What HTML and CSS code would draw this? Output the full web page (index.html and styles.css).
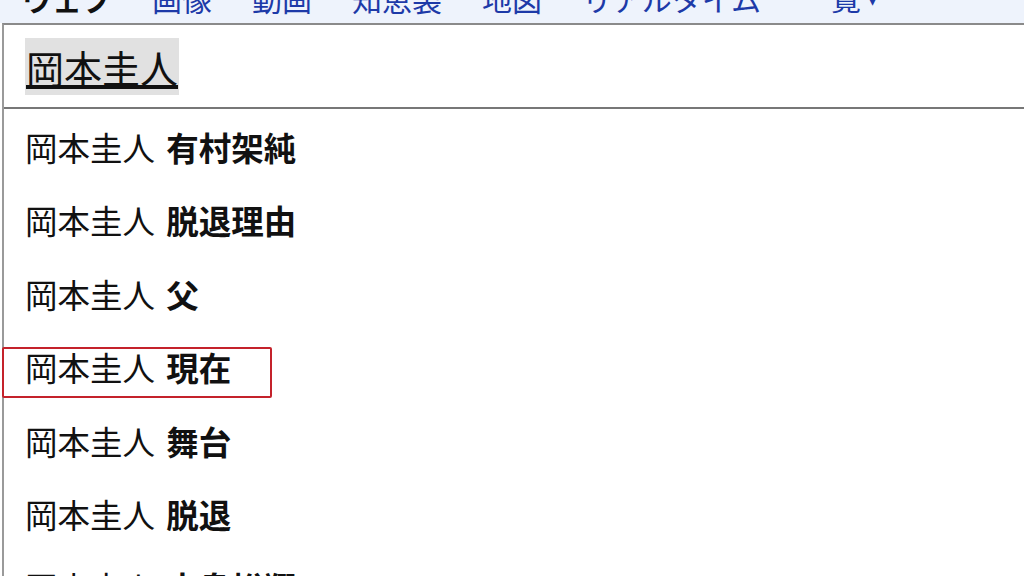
FILE: index.html
```html
<!DOCTYPE html>
<html lang="ja">
<head>
    <meta charset="UTF-8">
    <meta name="viewport" content="width=device-width, initial-scale=1.0">
    <title>検索候補</title>
    <link rel="stylesheet" href="styles.css">
</head>
<body>
    <div class="tabs">
        <span class="tab current">ウェブ</span>
        <span class="tab">画像</span>
        <span class="tab">動画</span>
        <span class="tab">知恵袋</span>
        <span class="tab">地図</span>
        <span class="tab">リアルタイム</span>
        <span class="tab">一覧 <small>▾</small></span>
    </div>
    <div class="search">
        <div class="query">
            <span class="typed">岡本圭人</span>
        </div>
        <ul class="suggest">
            <li>岡本圭人 <b>有村架純</b></li>
            <li>岡本圭人 <b>脱退理由</b></li>
            <li>岡本圭人 <b>父</b></li>
            <li class="marked">岡本圭人 <b>現在</b><span class="mark"></span></li>
            <li>岡本圭人 <b>舞台</b></li>
            <li>岡本圭人 <b>脱退</b></li>
            <li>岡本圭人 <b>中島裕翔</b></li>
        </ul>
    </div>
</body>
</html>
```

FILE: styles.css
```css
html, body { margin: 0; height: 100%; overflow: hidden; }
body {
    font-family: "Noto Sans CJK JP", "Noto Sans", sans-serif;
    background: #fff;
    color: #111;
}

/* barra de pestañas, cortada arriba */
.tabs {
    height: 23px;
    background: #eef3fc;
    display: flex;
    gap: 40px;
    padding-left: 22px;
    overflow: hidden;
    align-items: flex-end;
}
.tab {
    font-size: 30px;
    line-height: 30px;
    margin-bottom: 10px;
    color: #1d3aa8;
    white-space: nowrap;
}
.tab small { font-size: 18px; vertical-align: 4px; }
.tab.current { color: #111; font-weight: bold; }

.search {
    border-top: 2px solid #8a8a8a;
    border-left: 2px solid #9a9a9a;
    margin-left: 2px;
    height: 100%;
}
.query {
    height: 82px;
    padding-left: 21px;
    border-bottom: 2px solid #777;
    display: flex;
    align-items: center;
}
.typed {
    font-size: 38px;
    line-height: 57px;
    background: #e1e1e1;
    text-decoration: underline;
    text-decoration-thickness: 4px;
    text-underline-offset: 2px;
    padding: 0 1px;
}

.suggest {
    list-style: none;
    margin: 0;
    padding: 1px 0 0 0;
}
.suggest li {
    height: 73.4px;
    line-height: 73px;
    font-size: 32.5px;
    padding-left: 21px;
    position: relative;
    white-space: nowrap;
}
.suggest b { font-weight: bold; margin-left: 4px; }

.mark {
    position: absolute;
    left: -2px;
    top: 17px;
    width: 266px;
    height: 47px;
    border: 2px solid #c4222b;
    border-radius: 2px;
}
```
